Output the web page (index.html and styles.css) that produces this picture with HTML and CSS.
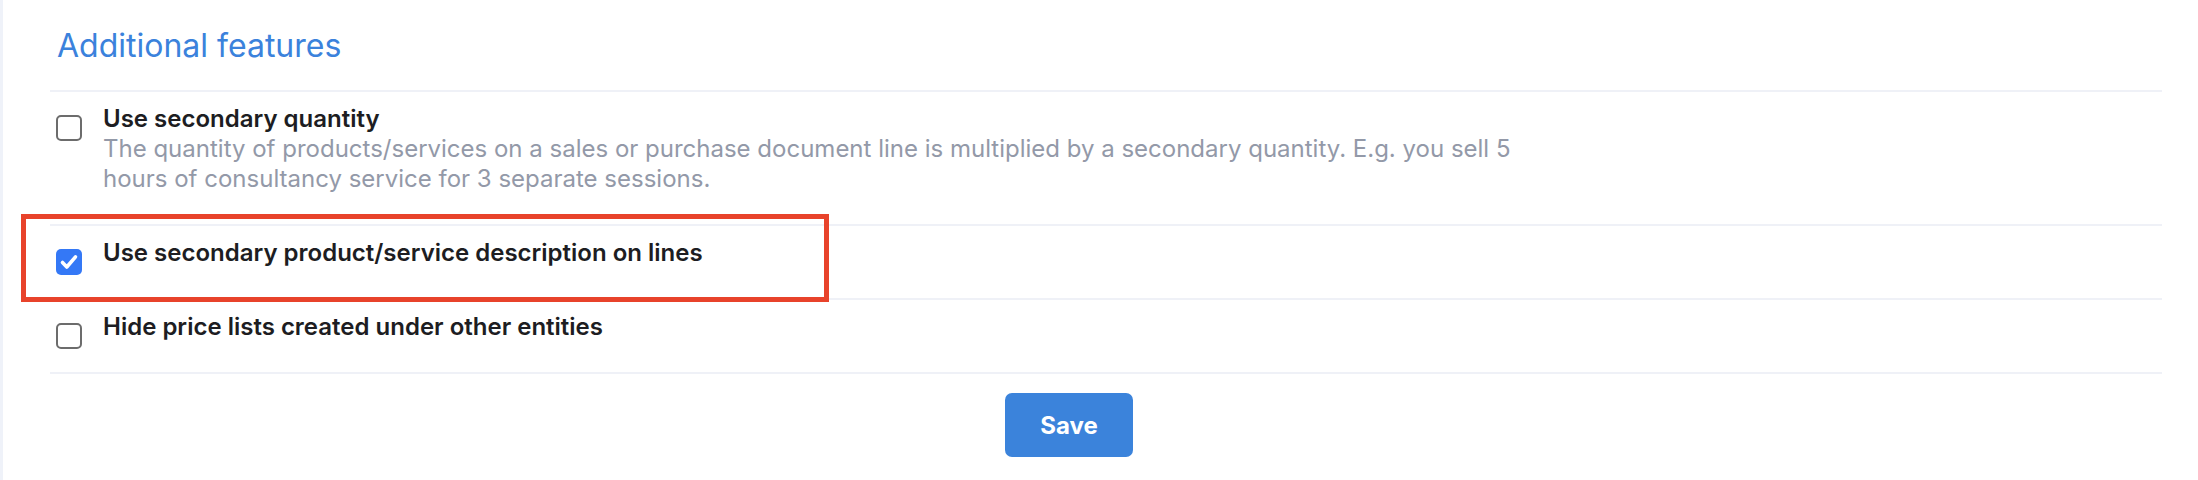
FILE: index.html
```html
<!DOCTYPE html>
<html lang="en">
<head>
<meta charset="utf-8">
<title>Additional features</title>
<link rel="stylesheet" href="styles.css">
</head>
<body>
<div class="page">
  <h2 class="title">Additional features</h2>
  <div class="list">
    <div class="row">
      <span class="box"></span>
      <div class="text">
        <div class="label">Use secondary quantity</div>
        <div class="desc">The quantity of products/services on a sales or purchase document line is multiplied by a secondary quantity. E.g. you sell 5 hours of consultancy service for 3 separate sessions.</div>
      </div>
    </div>
    <div class="row highlighted">
      <span class="box checked">
        <svg viewBox="0 0 26 26" width="26" height="26"><path d="M6.5 13.5 L10.8 18 L19.5 7.8" fill="none" stroke="#fff" stroke-width="3.6" stroke-linecap="round" stroke-linejoin="round"/></svg>
      </span>
      <div class="text">
        <div class="label">Use secondary product/service description on lines</div>
      </div>
      <div class="annot"></div>
    </div>
    <div class="row last">
      <span class="box"></span>
      <div class="text">
        <div class="label">Hide price lists created under other entities</div>
      </div>
    </div>
  </div>
  <div class="actions">
    <button class="save" type="button">Save</button>
  </div>
</div>
</body>
</html>
```

FILE: styles.css
```css
html, body {
  margin: 0;
  padding: 0;
  background: #ffffff;
}
body {
  font-family: Inter, "Noto Sans", "Liberation Sans", sans-serif;
  border-left: 3px solid #eff2f9;
  min-height: 480px;
  box-sizing: border-box;
}
.page {
  margin-left: 47px;
  width: 2112px;
}
.title {
  margin: 26px 0 24px 7px;
  font-size: 32px;
  line-height: 40px;
  font-weight: 400;
  color: #3b82dc;
}
.list {
  display: flex;
  flex-direction: column;
}
.row {
  display: flex;
  align-items: flex-start;
  gap: 21px;
  padding: 12px 0 30px 6px;
  border-top: 2px solid #eff1f7;
  position: relative;
}
.row.last {
  border-bottom: 2px solid #eff1f7;
}
.box {
  flex: none;
  width: 26px;
  height: 26px;
  margin-top: 11px;
  margin-bottom: -7px;
  box-sizing: border-box;
  border: 2px solid #6c6c6c;
  border-radius: 5px;
  background: #fff;
  display: flex;
}
.box.checked {
  border: none;
  background: #3478f6;
}
.text {
  display: flex;
  flex-direction: column;
}
.label {
  font-size: 24px;
  line-height: 30px;
  font-weight: 600;
  color: #1d1d22;
}
.desc {
  font-size: 24px;
  line-height: 30px;
  font-weight: 400;
  color: #9399a8;
  max-width: 1440px;
}
.annot {
  position: absolute;
  left: -29px;
  top: -12px;
  width: 808px;
  height: 88px;
  box-sizing: border-box;
  border: 5px solid #e8432b;
  z-index: 2;
}
.actions {
  display: flex;
  padding-top: 19px;
}
.save {
  margin-left: 955px;
  width: 128px;
  height: 64px;
  border: none;
  border-radius: 7px;
  background: #3b83db;
  color: #fff;
  font-family: Inter, "Noto Sans", "Liberation Sans", sans-serif;
  font-size: 24px;
  font-weight: 700;
  cursor: pointer;
}
```
